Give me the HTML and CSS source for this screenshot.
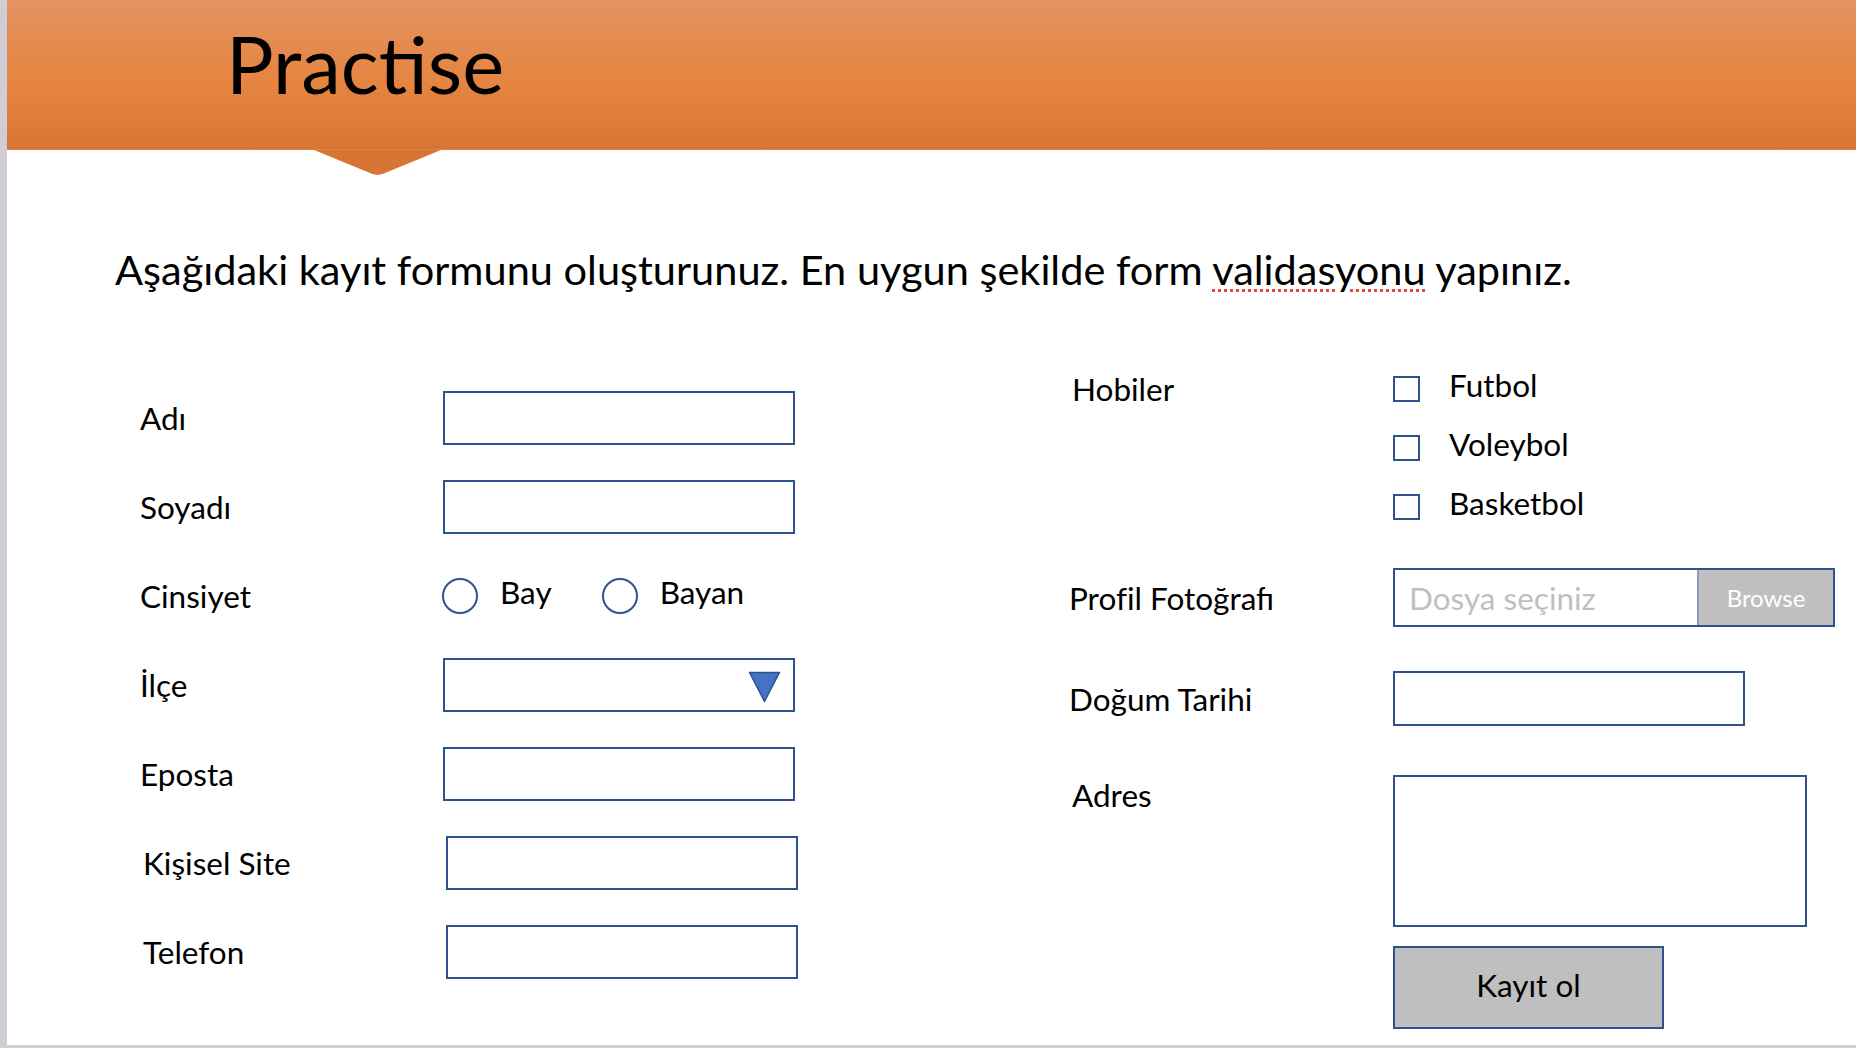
FILE: index.html
```html
<!DOCTYPE html>
<html lang="tr">
<head>
<meta charset="utf-8">
<title>Practise</title>
<link rel="stylesheet" href="styles.css">
</head>
<body>
<div class="slide">
  <header class="banner">
    <h1 class="title">Practise</h1>
    <span class="pointer"></span>
  </header>

  <p class="task">Aşağıdaki kayıt formunu oluşturunuz. En uygun şekilde form <span class="squiggle">validasyonu</span> yapınız.</p>

  <form class="form">
    <div class="col-left">
      <div class="frow"><label class="lbl">Adı</label><input class="box" type="text"></div>
      <div class="frow"><label class="lbl">Soyadı</label><input class="box" type="text"></div>
      <div class="frow">
        <label class="lbl">Cinsiyet</label>
        <div class="radios">
          <label class="radio"><input type="radio" name="c"><span>Bay</span></label>
          <label class="radio"><input type="radio" name="c"><span>Bayan</span></label>
        </div>
      </div>
      <div class="frow">
        <label class="lbl">İlçe</label>
        <div class="box select">
          <svg width="33" height="32" viewBox="0 0 33 32"><polygon points="1.5,1.5 31.5,1.5 16.5,30.5" fill="#4472c4" stroke="#2f528f" stroke-width="1.5" stroke-linejoin="round"/></svg>
        </div>
      </div>
      <div class="frow"><label class="lbl">Eposta</label><input class="box" type="email"></div>
      <div class="frow nudge"><label class="lbl">Kişisel Site</label><input class="box" type="url"></div>
      <div class="frow nudge"><label class="lbl">Telefon</label><input class="box" type="tel"></div>
    </div>

    <div class="col-right">
      <div class="frow top hobbies">
        <label class="lbl tall nudge">Hobiler</label>
        <div class="checks">
          <label class="check"><input type="checkbox"><span>Futbol</span></label>
          <label class="check"><input type="checkbox"><span>Voleybol</span></label>
          <label class="check"><input type="checkbox"><span>Basketbol</span></label>
        </div>
      </div>
      <div class="frow photo">
        <label class="lbl">Profil Fotoğrafı</label>
        <div class="file"><span class="ph">Dosya seçiniz</span><span class="browse">Browse</span></div>
      </div>
      <div class="frow birth">
        <label class="lbl">Doğum Tarihi</label>
        <input class="box date" type="text">
      </div>
      <div class="frow top address">
        <label class="lbl tall nudge">Adres</label>
        <textarea class="area"></textarea>
      </div>
      <div class="frow submit">
        <button class="btn" type="button">Kayıt ol</button>
      </div>
    </div>
  </form>
</div>
</body>
</html>
```

FILE: styles.css
```css
* { box-sizing: border-box; }

html, body { margin: 0; padding: 0; }

body {
  background: #d0ced4;
  font-family: Lato, "Open Sans", sans-serif;
  color: #000;
}

.slide {
  margin-left: 7px;
  height: 1045px;
  background: #fff;
  position: relative;
  overflow: hidden;
}

.banner {
  position: relative;
  height: 150px;
  background: linear-gradient(#e39261 0%, #e5843f 58%, #d87534 100%);
  border-bottom: 1px solid #e2843f;
}

.title {
  margin: 0;
  padding: 18px 0 0 219px;
  font-weight: 400;
  font-size: 79.5px;
  line-height: 92px;
}

.pointer {
  position: absolute;
  left: 307px;
  top: 150px;
  width: 127px;
  height: 25px;
  background: #d87535;
  clip-path: polygon(0 0, 100% 0, 54% 96%, 50% 100%, 46% 96%);
}

.task {
  margin: 94px 0 0 108px;
  font-size: 41.5px;
  line-height: 50px;
}

.squiggle {
  text-decoration: underline dotted #e8473d;
  text-decoration-thickness: 3px;
  text-underline-offset: 4px;
}

.form {
  display: flex;
  gap: 271px;
  margin-top: 75px;
  padding-left: 133px;
}

.frow {
  display: flex;
  align-items: center;
}

.frow.top { align-items: flex-start; }

.lbl {
  flex-shrink: 0;
  font-size: 31.5px;
}

.lbl.tall { line-height: 40px; }

.nudge { margin-left: 3px; }

.col-left {
  display: flex;
  flex-direction: column;
  gap: 35px;
  padding-top: 22px;
  width: 658px;
}

.col-left .frow { height: 54px; }
.col-left .lbl { width: 303px; }

.box {
  width: 352px;
  height: 54px;
  border: 2px solid #2f528f;
  background: #fff;
  margin: 0;
  padding: 0 12px;
  font: inherit;
  outline: none;
}

.select {
  display: flex;
  justify-content: flex-end;
  align-items: flex-start;
  padding: 11px 12px 0 0;
}

.radios {
  display: flex;
  align-items: center;
  gap: 50px;
  margin-left: -1px;
}

.radio {
  display: flex;
  align-items: center;
  gap: 22px;
  font-size: 31.5px;
}

.radio span { margin-bottom: 8px; }

input[type="radio"],
input[type="checkbox"] {
  appearance: none;
  -webkit-appearance: none;
  margin: 0;
  background: #fff;
  border: 2px solid #2f528f;
  flex-shrink: 0;
}

input[type="radio"] {
  width: 36px;
  height: 36px;
  border-radius: 50%;
}

.col-right {
  display: flex;
  flex-direction: column;
  width: 787px;
}

.col-right .lbl { width: 324px; }
.col-right .nudge.lbl { width: 321px; }

.checks {
  display: flex;
  flex-direction: column;
  gap: 19px;
}

.check {
  display: flex;
  align-items: center;
  height: 40px;
  font-size: 31.5px;
}

.check span { margin-bottom: 8px; }

input[type="checkbox"] {
  width: 27px;
  height: 26px;
  margin-right: 29px;
}

.photo { margin-top: 41px; }

.file {
  display: flex;
  width: 442px;
  height: 59px;
  border: 2px solid #2f528f;
}

.ph {
  flex: 1;
  display: flex;
  align-items: center;
  padding-left: 14px;
  color: #bfbfbf;
  font-size: 31.5px;
}

.browse {
  width: 136px;
  display: flex;
  align-items: center;
  justify-content: center;
  background: #bfbfbf;
  color: #fff;
  font-size: 24px;
  border-left: 2px solid #8d9cb8;
}

.birth { margin-top: 44px; }

.date { height: 55px; }

.address { margin-top: 49px; }

.area {
  width: 414px;
  height: 152px;
  border: 2px solid #2f528f;
  resize: none;
  margin: 0;
  font: inherit;
  outline: none;
}

.submit {
  margin-top: 19px;
  padding-left: 324px;
}

.btn {
  width: 271px;
  height: 83px;
  background: #bfbfbf;
  border: 2px solid #2f528f;
  border-radius: 0;
  font-family: inherit;
  font-size: 31.5px;
  color: #000;
  padding: 0 0 5px;
}
```
